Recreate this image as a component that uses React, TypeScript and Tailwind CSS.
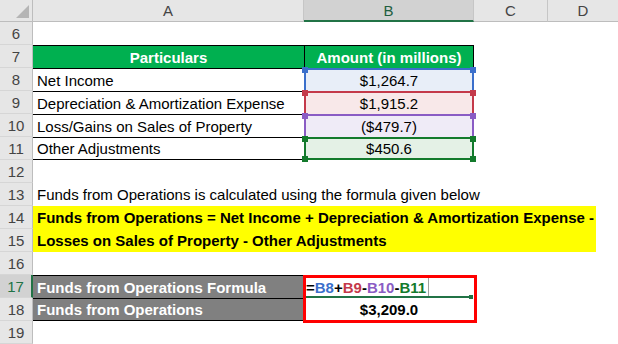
import React from "react";

const font = { fontFamily: '"Liberation Sans", Arial, sans-serif' };

function RowNum({ n, active }: { n: number; active?: boolean }) {
  return (
    <div
      className={
        "w-[33px] shrink-0 h-full flex items-center justify-center border-b border-b-[#d6d6d6] " +
        (active
          ? "bg-[#d2d2d2] text-[#217346] border-r-2 border-r-[#217346]"
          : "bg-[#e6e6e6] text-[#444444] border-r border-r-[#bdbdbd]")
      }
    >
      {n}
    </div>
  );
}

function Row({ children }: { children?: React.ReactNode }) {
  return <div className="flex h-[23px] w-[618px]">{children}</div>;
}

function Empty({ n }: { n: number }) {
  return (
    <Row>
      <RowNum n={n} />
      <div className="flex-1 bg-white" />
    </Row>
  );
}

function RefCell({
  text,
  border,
  fill,
  sq,
  last,
}: {
  text: string;
  border: string;
  fill: string;
  sq: string;
  last?: boolean;
}) {
  return (
    <div
      className={
        "relative w-[170px] h-full flex items-center justify-center border-x-2 border-t-2 " +
        border +
        " " +
        fill +
        (last ? " border-b-2" : "")
      }
    >
      {text}
      <span className={"absolute -top-[3px] -left-[4px] w-[6px] h-[6px] " + sq} />
      <span className={"absolute -top-[3px] -right-[4px] w-[6px] h-[6px] " + sq} />
      {last && (
        <>
          <span className={"absolute -bottom-[4px] -left-[4px] w-[6px] h-[6px] " + sq} />
          <span className={"absolute -bottom-[4px] -right-[4px] w-[6px] h-[6px] " + sq} />
        </>
      )}
    </div>
  );
}

function TableA({ text, last }: { text: string; last?: boolean }) {
  return (
    <div
      className={
        "w-[271px] shrink-0 h-full flex items-center pl-[4px] border-t border-black bg-white" +
        (last ? " border-b" : "")
      }
    >
      {text}
    </div>
  );
}

export default function App() {
  return (
    <div
      className="w-[618px] h-[344px] overflow-hidden bg-white text-[15px] text-black leading-none"
      style={font}
    >
      {/* Column header */}
      <div className="flex h-[22px] w-[618px] text-[#444444]">
        <div className="w-[33px] shrink-0 h-full bg-[#e6e6e6] border-r border-r-[#bdbdbd] border-b border-b-[#bdbdbd] relative">
          <svg width="33" height="22" className="absolute left-0 top-0">
            <polygon points="16,18 29,18 29,5" fill="#b5b5b5" />
          </svg>
        </div>
        <div className="w-[271px] shrink-0 h-full bg-[#e6e6e6] border-r border-r-[#c6c6c6] border-b border-b-[#bdbdbd] flex items-center justify-center">
          A
        </div>
        <div className="w-[170px] shrink-0 h-full bg-[#d2d2d2] border-r border-r-[#c6c6c6] border-b-2 border-b-[#217346] flex items-center justify-center text-[#1f5f40]">
          B
        </div>
        <div className="w-[74px] shrink-0 h-full bg-[#e6e6e6] border-r border-r-[#c6c6c6] border-b border-b-[#bdbdbd] flex items-center justify-center">
          C
        </div>
        <div className="flex-1 h-full bg-[#e6e6e6] border-b border-b-[#bdbdbd] flex items-center justify-center">
          D
        </div>
      </div>

      <Empty n={6} />

      <Row>
        <RowNum n={7} />
        <div className="w-[271px] shrink-0 h-full bg-[#00b050] text-white font-bold flex items-center justify-center border-t border-black">
          Particulars
        </div>
        <div className="w-[170px] shrink-0 h-full bg-[#00b050] text-white font-bold flex items-center justify-center border-t border-x border-black">
          Amount (in millions)
        </div>
        <div className="flex-1" />
      </Row>

      <Row>
        <RowNum n={8} />
        <TableA text="Net Income" />
        <RefCell text="$1,264.7" border="border-[#3b6fcb]" fill="bg-[#e8eef8]" sq="bg-[#3b6fcb]" />
        <div className="flex-1" />
      </Row>
      <Row>
        <RowNum n={9} />
        <TableA text="Depreciation & Amortization Expense" />
        <RefCell text="$1,915.2" border="border-[#c4394a]" fill="bg-[#f8e8e9]" sq="bg-[#c4394a]" />
        <div className="flex-1" />
      </Row>
      <Row>
        <RowNum n={10} />
        <TableA text="Loss/Gains on Sales of Property" />
        <RefCell text="($479.7)" border="border-[#8a5cc4]" fill="bg-[#efebf7]" sq="bg-[#8a5cc4]" />
        <div className="flex-1" />
      </Row>
      <Row>
        <RowNum n={11} />
        <TableA text="Other Adjustments" last />
        <RefCell text="$450.6" border="border-[#137a2c]" fill="bg-[#e4f1e6]" sq="bg-[#137a2c]" last />
        <div className="flex-1" />
      </Row>

      <Empty n={12} />

      <Row>
        <RowNum n={13} />
        <div className="flex-1 flex items-center pl-[4px] whitespace-nowrap">
          Funds from Operations is calculated using the formula given below
        </div>
      </Row>
      <Row>
        <RowNum n={14} />
        <div className="w-[563px] shrink-0 bg-[#ffff00] font-bold flex items-center pl-[4px] whitespace-nowrap">
          Funds from Operations = Net Income + Depreciation &amp; Amortization Expense -
        </div>
        <div className="flex-1" />
      </Row>
      <Row>
        <RowNum n={15} />
        <div className="w-[563px] shrink-0 bg-[#ffff00] font-bold flex items-center pl-[4px] whitespace-nowrap">
          Losses on Sales of Property - Other Adjustments
        </div>
        <div className="flex-1" />
      </Row>

      <Empty n={16} />

      <Row>
        <RowNum n={17} active />
        <div className="w-[271px] shrink-0 h-full bg-[#808080] text-white font-bold flex items-center pl-[4px] border-t border-black">
          Funds from Operations Formula
        </div>
        <div className="relative w-[170px] shrink-0 h-full flex items-center pl-[2px] font-bold border-t border-black">
          <span className="text-black">=</span>
          <span className="text-[#3b6fcb]">B8</span>
          <span className="text-black">+</span>
          <span className="text-[#c4394a]">B9</span>
          <span className="text-black">-</span>
          <span className="text-[#8a5cc4]">B10</span>
          <span className="text-black">-</span>
          <span className="text-[#137a2c]">B11</span>
          <span className="ml-[2px] w-px h-[20px] bg-[#a0a0a0]" />
          <span className="absolute left-[2px] right-[4px] bottom-0 h-[2px] bg-[#217346]" />
          <span className="absolute right-[1px] -bottom-[1px] w-[4px] h-[4px] bg-[#217346]" />
          <span className="absolute -left-[1px] -top-[1px] w-[174px] h-[48px] border-[3px] border-[#ff0000]" />
        </div>
        <div className="flex-1" />
      </Row>
      <Row>
        <RowNum n={18} />
        <div className="w-[271px] shrink-0 h-full bg-[#808080] text-white font-bold flex items-center pl-[4px] border-y border-black">
          Funds from Operations
        </div>
        <div className="w-[170px] shrink-0 h-full flex items-center justify-center font-bold">
          $3,209.0
        </div>
        <div className="flex-1" />
      </Row>

      <Empty n={19} />
    </div>
  );
}
